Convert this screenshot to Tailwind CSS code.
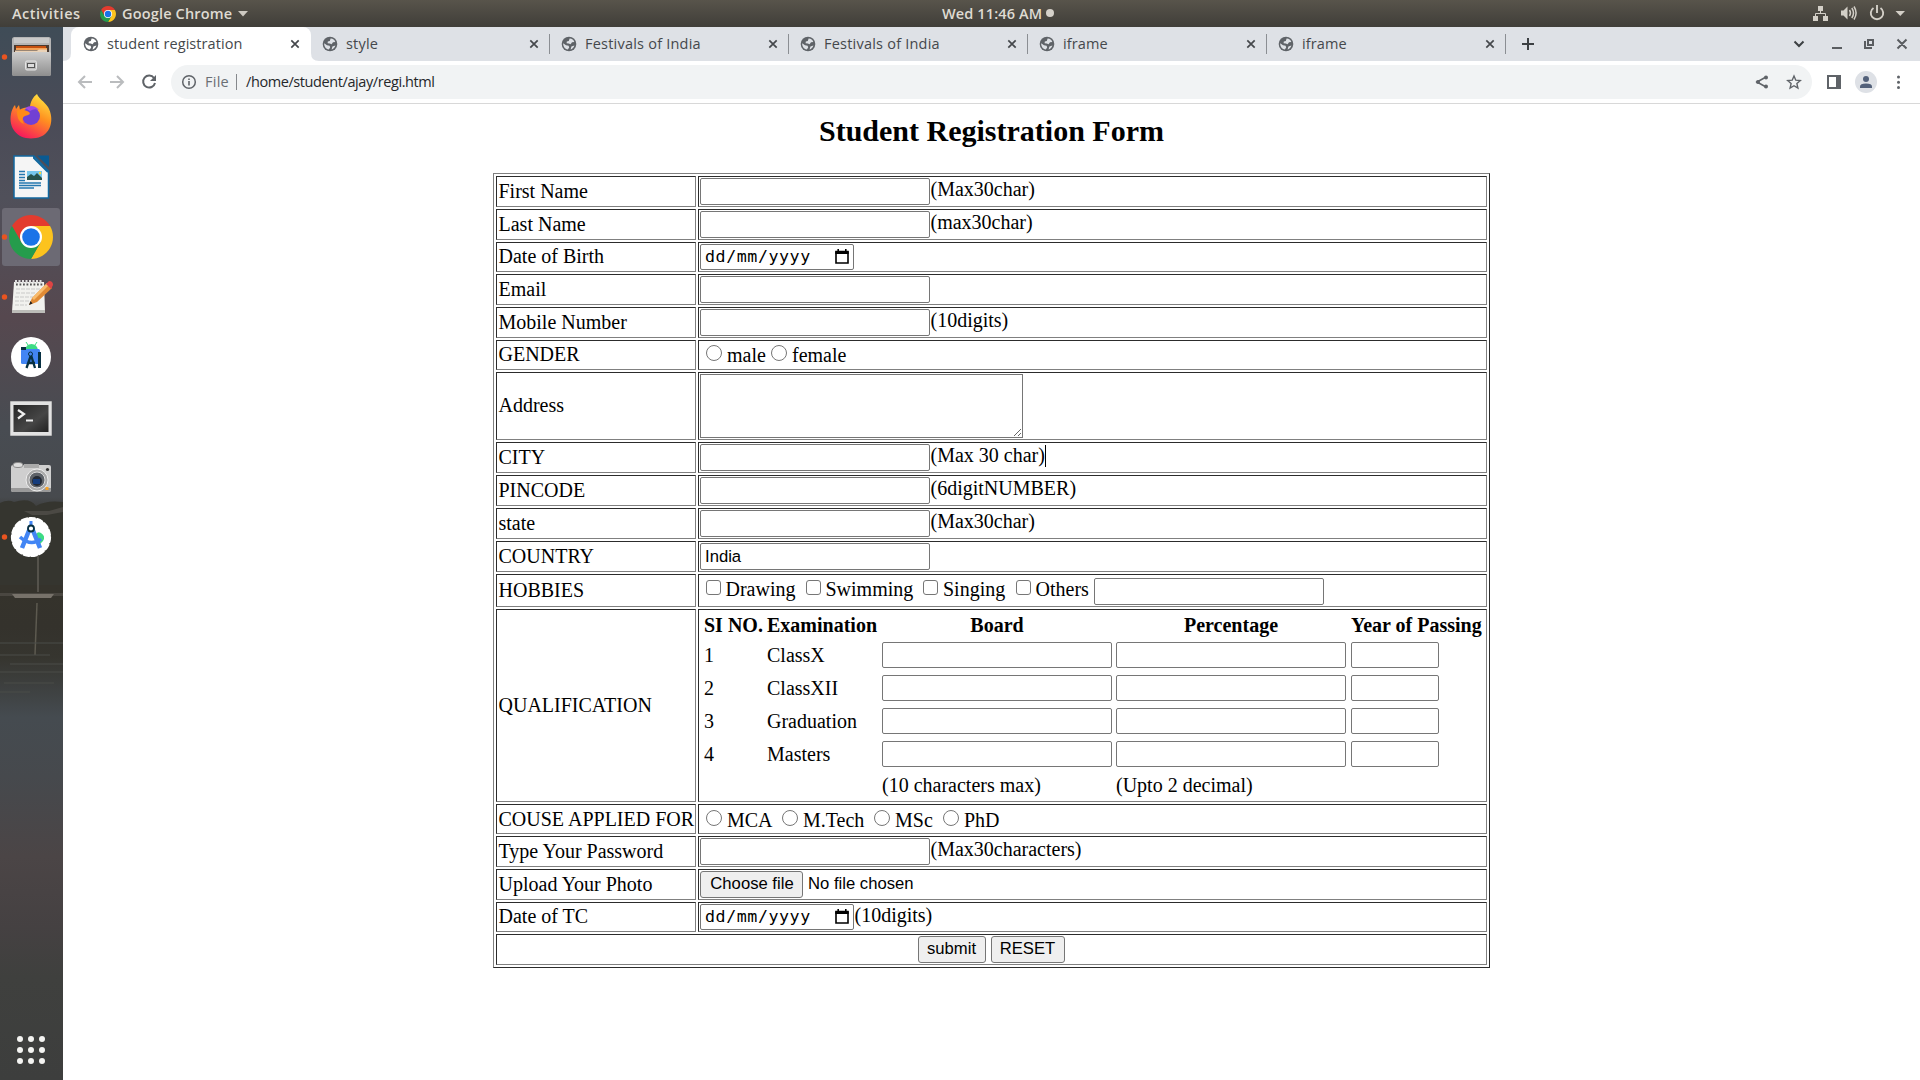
<!DOCTYPE html>
<html lang="en">
<head>
<meta charset="utf-8">
<title>student registration</title>
<script src="https://cdn.jsdelivr.net/npm/@tailwindcss/browser@4"></script>
</head>
<body class="w-[1920px] h-[1080px] overflow-hidden bg-white flex flex-col font-['Open_Sans',sans-serif]">
<svg class="hidden">
  <symbol id="globe" viewBox="0 0 16 16"><circle cx="8" cy="8" r="7.3" fill="#5f6368"/><path d="M8.6 2.6 C10.5 2.4 12.8 4 13.3 6 L11 6.2 9.6 8.2 7.8 7.6 5.6 7.2 5.8 5.6 7.8 5z M2.2 7.2 L5 9.2 7.6 9.8 8.2 11.4 6.8 13.6 C4 13 2 10.6 2.2 7.2z M9.6 13.4 L10.4 10.6 13.4 9.4 C12.8 11.4 11.4 12.9 9.6 13.4z" fill="currentColor"/></symbol>
  <symbol id="x" viewBox="0 0 10 10"><path d="M1.3 1.3 8.7 8.7 M8.7 1.3 1.3 8.7" stroke="#45484c" stroke-width="1.7" fill="none"/></symbol>
  <symbol id="chrome" viewBox="0 0 44 44"><path d="M3 11 A22 22 0 0 1 41.05 11 L22 11 22 22 12.5 27.5z" fill="#e33b2e"/><path d="M41.05 11 A22 22 0 0 1 22 44 L31.5 27.5 22 11z" fill="#fcc31e"/><path d="M2.95 11 A22 22 0 0 0 22 44 L31.5 27.5 12.5 27.5z" fill="#259c4c"/><circle cx="22" cy="22" r="11" fill="#fff"/><circle cx="22" cy="22" r="8.8" fill="#1a73e8"/></symbol>
  <symbol id="cal" viewBox="0 0 14 15"><path d="M1 3H13V14H1z" fill="none" stroke="#000" stroke-width="1.6"/><path d="M.3 1.8H13.7V5H.3z M2.4 0H4V3H2.4z M10 0H11.600V3H10z"/></symbol>
</svg>

<header class="h-[27px] shrink-0 bg-linear-to-b from-[#58544b] to-[#403e39] text-[#dfdbd2] text-[14.500px] font-semibold grid grid-cols-[930px_1fr_110px] items-center leading-[26px]">
  <div class="flex items-center pl-3"><span class="w-[88px] tracking-[0.500px]">Activities</span>
    <svg class="w-4 h-4 mr-[6px]"><use href="#chrome"/></svg><span class="w-[116px] tracking-[0.170px] whitespace-nowrap">Google Chrome</span>
    <svg class="w-[10px] h-[6px]" viewBox="0 0 10 6"><path d="M0 0H10L5 5.500z" fill="#cdc9c1"/></svg></div>
  <div class="flex items-center pl-3"><span class="w-[104px] whitespace-nowrap tracking-[0.120px]">Wed 11:46 AM</span><span class="size-2 -mt-px rounded-full bg-[#d5d1c9]"></span></div>
  <svg width="110" height="27" viewBox="1810 0 110 27" fill="#d3cfc7"><path d="M1818 6h5v5h-5z M1813 16h5v5h-5z M1823 16h5v5h-5z"/><path d="M1820.500 11v3 M1815.500 16v-2.500h10V16" fill="none" stroke="#d3cfc7"/><path d="M1841 10.500h2.500l4-4v13l-4-4H1841z"/><path d="M1849.500 10q2 3 0 6 M1851.800 8q3.400 5 0 10 M1854 6.500q4.200 6.500 0 13" fill="none" stroke="#d3cfc7" stroke-width="1.500"/><path d="M1873.500 8a6.200 6.200 0 1 0 7 0 M1877 5v8" fill="none" stroke="#d3cfc7" stroke-width="1.900"/><path d="M1895.500 11H1905L1900.250 16z"/></svg>
</header>

<div class="flex flex-1 min-h-0">
  <nav class="relative w-[63px] h-[1053px] shrink-0 bg-[linear-gradient(180deg,#3f4c57_0px,#4a4b57_90px,#50505a_170px,#56484f_290px,#484c52_400px,#474a4e_470px,#36352e_490px,#35332c_560px,#34322c_600px,#36352f_630px,#454b50_690px,#46494d_750px,#4b4546_830px,#454142_900px,#3f403e_950px,#3d3e3d_1053px)]">
    <svg class="absolute left-0 top-0" width="63" height="1053" viewBox="0 27 63 1053"><path d="M0 503 Q8 499 14 502 Q30 497 36 506 Q46 500 63 502V585H0z" fill="#35352f"/><path d="M24 511h25l14-4v5l-16 3h-15z" fill="#4b4944"/><path d="M0 596h63v-3H0z" fill="#4a4741"/><path d="M38 553v39" stroke="#77736a" stroke-width="1"/><path d="M12 594h42l-3 4H15z" fill="#77726a"/><path d="M37 603 35 655" stroke="#5d5a50" stroke-width="1.500"/><path d="M0 643h63 M0 655h50 M10 664h53 M0 672h63 M4 683h50 M0 692h30" stroke="#4b4c49" stroke-width="1"/></svg>
    <div class="relative flex flex-col h-full">
      <svg width="63" height="60"><defs><linearGradient id="g1" x2="0" y2="1"><stop stop-color="#ccc"/><stop offset="1" stop-color="#8e8e8e"/></linearGradient></defs><circle cx="4.500" cy="30" r="2.700" fill="#e95420"/><rect x="12" y="10" width="39" height="39" rx="2.500" fill="#b5b5b5"/><rect x="14" y="11" width="35" height="5" fill="#c9c9c9"/><rect x="14" y="18" width="35" height="9" fill="#4b3a30"/><path d="M16 19h30v2H16z" fill="#c6500f"/><path d="M16 21h31v2H16z" fill="#f3a257"/><path d="M15 23.500h22l2-1h8V25H15z" fill="#ead2b7"/><rect x="12" y="25" width="39" height="24" rx="2" fill="url(#g1)"/><rect x="25.500" y="34" width="11" height="9" rx="1.500" fill="#bbb" stroke="#e5e5e5"/><rect x="27.500" y="36.500" width="7" height="4" fill="#ddd" stroke="#555"/></svg>
      <svg width="63" height="60"><defs><linearGradient id="f1" x1=".8" x2=".3" y2="1"><stop stop-color="#ffe942"/><stop offset=".45" stop-color="#ff9020"/><stop offset="1" stop-color="#f7155e"/></linearGradient></defs><path d="M37 7c2 5 7 7 11 13 7 12 3 29-12 31-16 3-28-8-25-24 .5-3 2-7 4-9l1 4 3-4 1 5c3-3 8-2 10-2 0-6 3-11 7-14z" fill="url(#f1)"/><circle cx="31" cy="29" r="9" fill="#7140d4"/><path d="M17 24c3-3 8-1 12 1 2 2 0 3-4 4-3 1-3 5-1 8-6-2-7-8-7-13z" fill="#ff8a16"/><path d="M25 21q8-5 14 2-5-2-9 1z" fill="#a34be8"/></svg>
      <svg width="63" height="60"><path d="M14 9h20l14.500 15v27H14z" fill="#f5f5f5" stroke="#12679e" stroke-width="1.500"/><path d="M37 8.500h12V20z" fill="#0a5a92"/><path d="M34 9v2l14 14" stroke="#12679e" stroke-width="2" fill="none"/><path d="M19 24.500h6 M19 27.500h6 M19 30.500h6 M19 33.500h6 M19 36h22 M19 38.500h22 M19 41h15" stroke="#2578b0" stroke-width="1.400"/><path d="M27 24h15v9H27z" fill="#76c7ec"/><path d="M27 33v-3l4-3 3 2 3-3 5 5v2z" fill="#27534b"/><circle cx="40" cy="26" r="1.200" fill="#f7db3c"/></svg>
      <svg width="63" height="60"><rect x="2" y="1" width="58" height="58" rx="3" fill="#6c6a74"/><circle cx="4.500" cy="30" r="2.700" fill="#e95420"/><use href="#chrome" x="9" y="8" width="44" height="44"/></svg>
      <svg width="63" height="60"><circle cx="4.500" cy="30" r="2.700" fill="#e95420"/><path d="M14 15h30l1 30H12z" fill="#f1f1ee"/><path d="M12 43h33v3H12z" fill="#bdbdb9"/><path d="M16 16v-3m3.500 3v-3m3.500 3v-3m3.500 3v-3m3.500 3v-3m3.500 3v-3m3.500 3v-3m3.500 3v-3" stroke="#ddd" stroke-width="2"/><path d="M16 17.500h28" stroke="#555" stroke-width="2" stroke-dasharray="1.800 1.700"/><path d="M16 22h24 M16 26h20 M15 30h18 M15 34h14 M15 38h12" stroke="#c9c9c7" stroke-width="1.200" stroke-dasharray="4 1"/><path d="M29 38l3-7 15-15 5 5-15 14z" fill="#e08a34"/><path d="M32 31l15-15 2 2-15 15z" fill="#f8bb6c"/><path d="M46 17l3-3q4 0 4 4l-2 4z" fill="#dd4444"/><path d="M29 38l1.500-4 2 2.500z" fill="#222"/></svg>
      <svg width="63" height="60"><circle cx="31" cy="30" r="20" fill="#fff"/><path d="M25 23q1-6 6.500-6t6.500 6z" fill="#3ddc84"/><path d="M26 15l2 3m9-3-2 3" stroke="#3ddc84"/><rect x="21" y="22" width="19" height="15" rx="1.500" fill="#4285f4"/><path d="M21 20h5v3h-5z" fill="#073042"/><path d="M31 28l-4.500 13M31 28l4 13M28 36h7" stroke="#073042" stroke-width="2.300" fill="none"/><circle cx="30.500" cy="27" r="2" fill="#4285f4" stroke="#073042"/><path d="M38 25h3v16h-3z" fill="#073042"/></svg>
      <svg width="63" height="60"><defs><linearGradient id="t1" x2="1" y2="1"><stop stop-color="#252525"/><stop offset=".6" stop-color="#464646"/><stop offset="1" stop-color="#222"/></linearGradient></defs><rect x="10" y="14" width="42" height="35" rx="1" fill="#b9b9b9"/><rect x="11" y="15" width="40" height="33" fill="#e2e2e2"/><rect x="13.500" y="18" width="35" height="27" fill="url(#t1)"/><path d="M18 23l6 4-6 4.500" stroke="#eee" stroke-width="2.200" fill="none"/><path d="M26 33.500h7" stroke="#eee" stroke-width="2"/></svg>
      <svg width="63" height="60"><rect x="11" y="18" width="40" height="27" rx="2" fill="#cfcfcf"/><path d="M11 41h40v2q0 2-2 2H13q-2 0-2-2z" fill="#999"/><path d="M24 17h15v4H24z" fill="#aaa"/><ellipse cx="18" cy="18" rx="5" ry="2.500" fill="#ddd" stroke="#888"/><circle cx="37" cy="33" r="11" fill="#aaa" stroke="#eee"/><circle cx="37" cy="33" r="8" fill="#5e6268" stroke="#ddd"/><circle cx="37" cy="34" r="5" fill="#242a35"/><path d="M33 32h7v5h-7z" fill="#153c7c"/><circle cx="47.500" cy="22.500" r="1.600" fill="#333"/><path d="M45.500 40h3v3h-3z" fill="#f4a32b"/></svg>
      <svg width="63" height="60"><circle cx="4.500" cy="30" r="2.700" fill="#e95420"/><circle cx="31" cy="30" r="18.800" fill="#fff"/><circle cx="31" cy="30" r="18.600" fill="none" stroke="#fff" stroke-width="3" stroke-dasharray="5 2.790" stroke-linecap="round"/><path d="M36 27q2-3 5-1 5 3 2 8l-3 3h-4z" fill="#3ddc84"/><path d="M30 21 22 41 M32 21l8 20" stroke="#4285f4" stroke-width="4.500" fill="none"/><path d="M20 30q11 10 21 2" stroke="#4285f4" stroke-width="3.500" fill="none"/><path d="M31 14v6" stroke="#4285f4" stroke-width="3"/><circle cx="31" cy="21.500" r="3" fill="#fff" stroke="#073042" stroke-width="1.800"/></svg>
      <svg class="mt-auto" width="63" height="60" fill="#f4f4f2"><circle cx="20" cy="19" r="3"/><circle cx="31" cy="19" r="3"/><circle cx="42" cy="19" r="3"/><circle cx="20" cy="30" r="3"/><circle cx="31" cy="30" r="3"/><circle cx="42" cy="30" r="3"/><circle cx="20" cy="41" r="3"/><circle cx="31" cy="41" r="3"/><circle cx="42" cy="41" r="3"/></svg>
    </div>
  </nav>

  <main class="flex-1 flex flex-col">
    <div class="h-[34px] shrink-0 bg-[#dee1e6] flex text-[14.500px] text-[#45484c] leading-[34px] whitespace-nowrap">
      <svg width="8" height="34" viewBox="0 0 8 34"><path d="M0 34Q8 34 8 26V34z" fill="#fff"/></svg>
      <div class="w-[240px] bg-white rounded-t-lg flex items-center pl-[12px]"><svg class="size-4 mr-[8px] text-white"><use href="#globe"/></svg><span class="w-[183px] tracking-[0.080px]">student registration</span><svg class="size-[10px]"><use href="#x"/></svg></div>
      <svg width="8" height="34" viewBox="0 0 8 34"><path d="M8 34Q0 34 0 26V34z" fill="#fff"/></svg>
      <div class="w-[231px] flex items-center pl-[3px]"><svg class="size-4 mr-[8px] text-[#dee1e6]"><use href="#globe"/></svg><span class="w-[183px] tracking-[0.200px]">style</span><svg class="size-[10px]"><use href="#x"/></svg><i class="ml-auto w-px h-5 bg-[#8b8e93]"></i></div>
      <div class="w-[239px] flex items-center pl-[11px]"><svg class="size-4 mr-[8px] text-[#dee1e6]"><use href="#globe"/></svg><span class="w-[183px] tracking-[0.220px]">Festivals of India</span><svg class="size-[10px]"><use href="#x"/></svg><i class="ml-auto w-px h-5 bg-[#8b8e93]"></i></div>
      <div class="w-[239px] flex items-center pl-[11px]"><svg class="size-4 mr-[8px] text-[#dee1e6]"><use href="#globe"/></svg><span class="w-[183px] tracking-[0.220px]">Festivals of India</span><svg class="size-[10px]"><use href="#x"/></svg><i class="ml-auto w-px h-5 bg-[#8b8e93]"></i></div>
      <div class="w-[239px] flex items-center pl-[11px]"><svg class="size-4 mr-[8px] text-[#dee1e6]"><use href="#globe"/></svg><span class="w-[183px] tracking-[0.100px]">iframe</span><svg class="size-[10px]"><use href="#x"/></svg><i class="ml-auto w-px h-5 bg-[#8b8e93]"></i></div>
      <div class="w-[239px] flex items-center pl-[11px]"><svg class="size-4 mr-[8px] text-[#dee1e6]"><use href="#globe"/></svg><span class="w-[183px] tracking-[0.100px]">iframe</span><svg class="size-[10px]"><use href="#x"/></svg><i class="ml-auto w-px h-5 bg-[#8b8e93]"></i></div>
      <svg width="40" height="34" viewBox="1506 27 40 34"><path d="M1522 44h12M1528 38v12" stroke="#3c4043" stroke-width="2"/></svg>
      <svg class="ml-auto" width="140" height="34" viewBox="1780 27 140 34" fill="none" stroke="#5a5d61" stroke-width="2"><path d="M1794.500 41.500l4.500 4.500 4.500-4.500" stroke="#3c4043"/><path d="M1832 48h10M1868 40h5v5h-5z M1865 41v7h7 M1897.500 39.500l9 9m0-9l-9 9"/></svg>
    </div>
    <div class="h-[43px] shrink-0 border-b border-[#d8d8d8] flex items-center text-[14.500px]">
      <svg width="108" height="34" viewBox="63 65 108 34" fill="none" stroke="#babcbe" stroke-width="2"><path d="M92 82H79.500M85 76l-6 6 6 6 M110 82h12.500M117 76l6 6-6 6"/><path d="M154 78a6 6 0 1 0 1 5" stroke="#5f6368"/><path d="M156 75v6h-6z" fill="#5f6368" stroke="none"/></svg>
      <div class="w-[1641px] h-[34px] rounded-full bg-[#f1f3f4] flex items-center">
        <svg class="ml-[10px]" width="16" height="16" viewBox="0 0 16 16"><circle cx="8" cy="8" r="6.300" fill="none" stroke="#5f6368" stroke-width="1.500"/><path d="M7.200 4.500h1.600v1.600H7.200zM7.200 7h1.600v4.500H7.200z" fill="#5f6368"/></svg>
        <span class="ml-2 w-[31px] tracking-[0.250px] text-[#6b6f74]">File</span><i class="w-px h-4 bg-[#85888c]"></i><span class="ml-[9px] text-[#25272a] tracking-[-0.410px] whitespace-nowrap">/home/student/ajay/regi.html</span>
        <svg class="ml-auto" width="62" height="34" viewBox="1750 65 62 34" fill="none" stroke="#5f6368" stroke-width="1.600"><path d="M1766 77l-9 5 9 5"/><g fill="#5f6368" stroke="none"><circle cx="1766" cy="77.500" r="2"/><circle cx="1758" cy="82" r="2"/><circle cx="1766" cy="86.500" r="2"/></g><path d="M1794 76l1.800 4.200 4.500.4-3.400 3 1 4.400-3.900-2.300-3.900 2.300 1-4.400-3.400-3 4.500-.4z" stroke-width="1.400"/></svg>
      </div>
      <svg width="108" height="34" viewBox="1812 65 108 34" fill="#5f6368"><path d="M1827 75h14v14h-14z M1829 77v10h7v-10z" fill-rule="evenodd"/><circle cx="1866" cy="82" r="11" fill="#dee1e6"/><g fill="#53617a"><circle cx="1866" cy="79" r="3"/><path d="M1860 88v-1.500q0-3 6-3t6 3v1.500z"/></g><circle cx="1898.500" cy="77" r="1.500"/><circle cx="1898.500" cy="82.300" r="1.500"/><circle cx="1898.500" cy="87.500" r="1.500"/></svg>
    </div>

    <form class="flex flex-col items-center font-['Liberation_Serif',serif] text-[20px] leading-[23px] text-black">
      <h1 class="mt-[10px] h-[59px] text-[30px] leading-[34px] font-bold">Student Registration Form</h1>
      <div class="w-[997px] border border-t-[#808080] border-l-[#808080] border-r-[#2c2c2c] border-b-[#2c2c2c] p-[2px] grid grid-cols-[200px_789px] gap-[2px] grid-rows-[31px_31px_30px_31px_31px_30px_68px_31px_31px_31px_31px_33px_193px_30px_31px_31px_30px_31px] whitespace-nowrap
        *:border *:border-t-[#2c2c2c] *:border-l-[#2c2c2c] *:border-r-[#808080] *:border-b-[#808080] *:flex *:items-start [&>label]:items-center [&>label]:pl-[1.500px] [&>div]:pl-px [&>div]:pt-px [&_input]:h-[27px] [&_input]:w-[230px] [&_input]:border [&_input]:border-[#767676] [&_input]:rounded-[2px] [&_input]:bg-white [&_input]:shrink-0 [&>div>input]:mr-[0.500px] [&_b]:size-[16px] [&_b]:border [&_b]:border-[#767676] [&_b]:shrink-0 [&_button]:h-[27px] [&_button]:border [&_button]:border-[#767676] [&_button]:rounded-[3px] [&_button]:bg-[#efefef] [&_button]:font-['Liberation_Sans',sans-serif] [&_button]:text-[16.667px] [&_button]:leading-[23px] [&_button]:pb-[2px]">
        <label>First Name</label><div><input>(Max30char)</div>
        <label>Last Name</label><div><input>(max30char)</div>
        <label class="pb-[2px]">Date of Birth</label><div><span class="w-[154px] h-[26px] border border-[#767676] rounded-[2px] flex items-center pl-[4px] font-['DejaVu_Sans_Mono',monospace] text-[16.667px] leading-[24px]"><span class="w-[130px] tracking-[0.550px]">dd/mm/yyyy</span><svg class="-mt-px" width="14" height="15"><use href="#cal"/></svg></span></div>
        <label>Email</label><div><input></div>
        <label>Mobile Number</label><div><input>(10digits)</div>
        <label class="pb-[2px]">GENDER</label><div><p class="pl-[6px] pt-[2px] flex"><b class="rounded-full mt-px"></b><span class="ml-[5px] w-[44px]">male</span><b class="rounded-full mt-px"></b><span class="ml-[5px]">female</span></p></div>
        <label class="pb-[2px]">Address</label><div><span class="w-[323px] h-[64px] border border-[#767676] flex items-end justify-end"><svg width="9" height="9" viewBox="0 0 9 9"><path d="M1 8 8 1M5 8l3-3" stroke="#666"/></svg></span></div>
        <label>CITY</label><div><input>(Max 30 char)<i class="w-px h-[22px] mt-px bg-black"></i></div>
        <label>PINCODE</label><div><input>(6digitNUMBER)</div>
        <label>state</label><div><input>(Max30char)</div>
        <label>COUNTRY</label><div><input value="India" class="font-['Liberation_Sans',sans-serif] text-[16.667px] pl-[4px]"></div>
        <label>HOBBIES</label><div><p class="pl-[6px] pt-[2px] flex [&>b]:!size-[15px]"><b class="rounded-[3px] mt-[2px]"></b><span class="ml-[4.500px] w-[80px]">Drawing</span><b class="rounded-[3px] mt-[2px]"></b><span class="ml-[5px] w-[97.500px]">Swimming</span><b class="rounded-[3px] mt-[2px]"></b><span class="ml-[5px] w-[73px]">Singing</span><b class="rounded-[3px] mt-[2px]"></b><span class="ml-[4.500px] w-[58.500px]">Others</span><input></p></div>
        <label>QUALIFICATION</label><div><section class="pl-[4px] pt-[3px] grid grid-cols-[63px_115px_234px_235px_132px] grid-rows-[28px_33px_33px_33px_33px_23px] items-start [&_input]:!h-[26px] [&>span]:mt-[2px]">
          <strong>SI NO.</strong><strong>Examination</strong><strong class="w-[230px] text-center">Board</strong><strong class="w-[230px] text-center">Percentage</strong><strong>Year of Passing</strong>
          <span>1</span><span>ClassX</span><input><input><input class="!w-[88px]">
          <span>2</span><span>ClassXII</span><input><input><input class="!w-[88px]">
          <span>3</span><span>Graduation</span><input><input><input class="!w-[88px]">
          <span>4</span><span>Masters</span><input><input><input class="!w-[88px]">
          <em class="col-start-3 not-italic">(10 characters max)</em><em class="not-italic">(Upto 2 decimal)</em>
        </section></div>
        <label>COUSE APPLIED FOR</label><div><p class="pl-[6px] pt-[3px] flex"><b class="rounded-full mt-px"></b><span class="ml-[5px] w-[55px]">MCA</span><b class="rounded-full mt-px"></b><span class="ml-[5px] w-[71px]">M.Tech</span><b class="rounded-full mt-px"></b><span class="ml-[5px] w-[48px]">MSc</span><b class="rounded-full mt-px"></b><span class="ml-[5px]">PhD</span></p></div>
        <label>Type Your Password</label><div><input>(Max30characters)</div>
        <label>Upload Your Photo</label><div><button type="button" class="w-[103px] pl-px">Choose file</button><span class="ml-[5px] mt-px font-['Liberation_Sans',sans-serif] text-[16.667px] leading-[23px]">No file chosen</span></div>
        <label class="pb-[2px]">Date of TC</label><div><span class="w-[154px] h-[26px] mr-[0.500px] border border-[#767676] rounded-[2px] flex items-center pl-[4px] font-['DejaVu_Sans_Mono',monospace] text-[16.667px] leading-[24px]"><span class="w-[130px] tracking-[0.550px]">dd/mm/yyyy</span><svg class="-mt-px" width="14" height="15"><use href="#cal"/></svg></span>(10digits)</div>
        <div class="col-span-2 justify-center gap-[5px] pr-[2px]"><button type="button" class="w-[68px]">submit</button><button type="button" class="w-[74px]">RESET</button></div>
      </div>
    </form>
  </main>
</div>
</body>
</html>
